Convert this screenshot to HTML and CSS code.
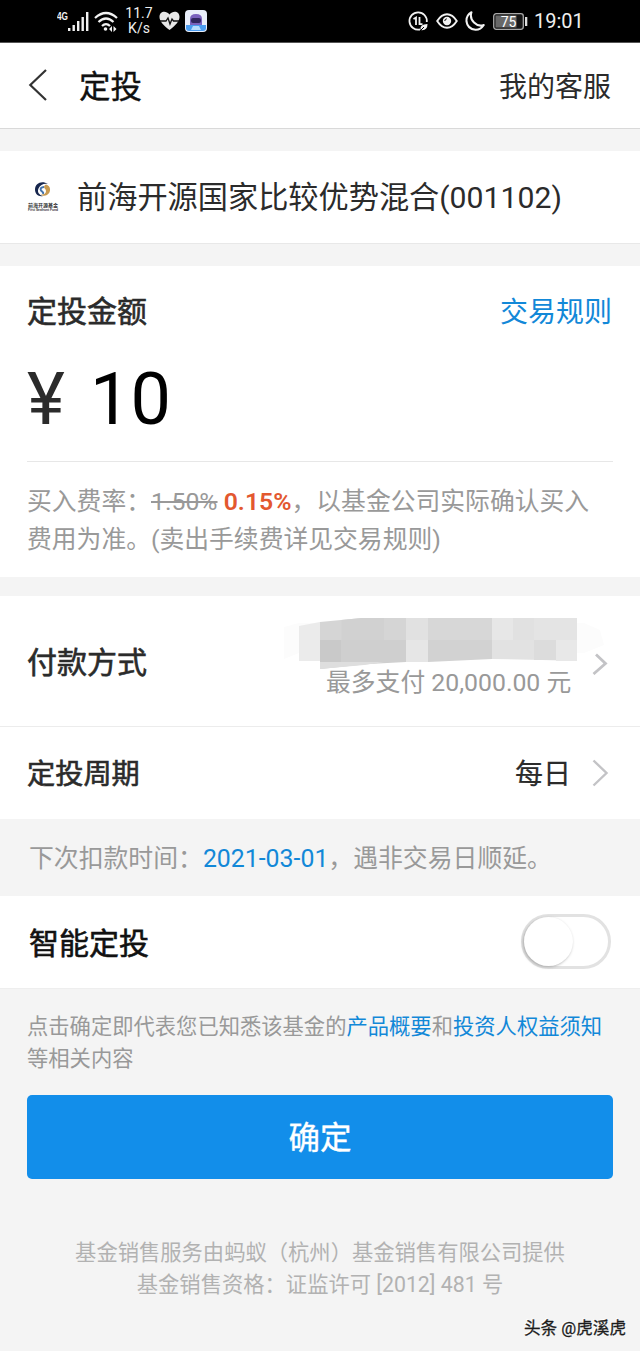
FILE: index.html
```html
<!DOCTYPE html>
<html lang="zh-CN">
<head>
<meta charset="utf-8">
<title>定投</title>
<link rel="stylesheet" href="styles.css">
</head>
<body>
<div class="status">
  <svg class="status-signal" width="34" height="24" viewBox="0 0 34 24" fill="#f2f2f2">
    <text x="0" y="11" class="net" textLength="11" lengthAdjust="spacingAndGlyphs">4G</text>
    <rect x="11" y="19" width="2.4" height="3"/><rect x="15.500" y="16" width="2.4" height="6"/><rect x="20" y="12" width="2.4" height="10"/><rect x="24.500" y="8" width="2.4" height="14"/><rect x="29" y="3" width="2.400" height="19"/>
  </svg>
  <svg class="status-wifi" width="24" height="22" viewBox="0 0 24 22" fill="none" stroke="#f2f2f2" stroke-width="2.2">
    <path d="M1 8Q12-2 23 8M4.500 12Q12 5 19.500 12M8 16Q12 12 16 16"/><circle cx="11.500" cy="19" r="1.800" fill="#f2f2f2" stroke="none"/><path fill="#f2f2f2" stroke="none" d="M18 16v6l-3-3zM19.500 16v6l3-3z"/>
  </svg>
  <div class="speed"><span>11.7</span><span>K/s</span></div>
  <svg class="status-heart" width="21" height="20" viewBox="0 0 21 20"><path fill="#e8e8e8" d="M10.500 19C4 14 .5 10 .5 6 .5 0 7-1 10.500 3.500 14-1 20.500 0 20.500 6c0 4-3.500 8-10 13z"/><path d="M1 10h6l2-3 2 6 2-5 1.500 2H20" fill="none" stroke="#111" stroke-width="1.300"/></svg>
  <svg class="status-app" width="22" height="22" viewBox="0 0 22 22"><rect width="22" height="22" rx="4" fill="#e9eefa"/><path d="M1 15h20v3q0 3-3 3H4q-3 0-3-3z" fill="#4b9df0"/><path d="M5 15V9q0-5 6-5t6 5v6z" fill="#7961bd"/><rect x="6" y="8" width="10" height="5" rx="2" fill="#30265f"/><path d="M8 16h6l2 4H6z" fill="#b5dcff"/></svg>
  <span class="grow"></span>
  <svg class="status-data" width="21" height="21" viewBox="0 0 21 21" fill="none" stroke="#f2f2f2" stroke-width="1.800"><path d="M18.800 11A8.700 8.700 0 1 0 12 18.500"/><path d="M5.500 8L8 6.500v7.500M11.500 6v7.200h3"/><path d="M12.500 19q-1-6 7-6 0 7-7 6z" fill="#f2f2f2" stroke="none"/><path d="M12 20l4-4" stroke="#000" stroke-width="1"/></svg>
  <svg class="status-eye" width="22" height="16" viewBox="0 0 22 16" fill="none" stroke="#f2f2f2" stroke-width="1.900"><path d="M1.200 8Q5.500 1.200 11 1.200T20.800 8Q16.500 14.800 11 14.800T1.200 8z"/><circle cx="11" cy="8" r="4.200" fill="#f2f2f2" stroke="none"/><path d="M8.800 8q0-2 2-2.200" stroke="#000" stroke-width="1"/></svg>
  <svg class="status-moon" width="20" height="20" viewBox="0 0 20 20" fill="none" stroke="#f2f2f2" stroke-width="2" stroke-linejoin="round"><path d="M6.500 1.200Q4.500 7 9 11.500T18.800 14Q15.500 19 10.500 18.800 2.500 18 1.500 10.500 1 4.500 6.500 1.200z"/></svg>
  <svg class="status-battery" width="35" height="17" viewBox="0 0 35 17"><rect x=".7" y=".7" width="29.600" height="15.600" rx="2.500" fill="#161616" stroke="#a8a8a8" stroke-width="1.300"/><rect x="2.500" y="2.500" width="21" height="12" fill="#686868"/><rect x="32" y="4" width="2.300" height="9" fill="#ddd"/><text x="15.500" y="13.500" class="level">75</text></svg>
  <span class="time">19:01</span>
</div>

<header class="header">
  <svg class="back" width="20" height="32" viewBox="0 0 20 32" fill="none" stroke="#333" stroke-width="2.200"><path d="M18 1L2.300 16 18 31"/></svg>
  <h1 class="title">定投</h1>
  <span class="service">我的客服</span>
</header>

<section class="fund">
  <svg class="fund-logo" width="32" height="32" viewBox="0 0 32 32">
    <path d="M21 3C15-1 8 2 8 8.500c0 5 4 7.500 8 6.500-4-1-6-4-4.500-7.500C13 4 17 2 21 3z" fill="#17264d"/>
    <path d="M19 3.500c5 1 5.500 8 1 10.500-2 1.200-5 1-6-.5 3 .5 5-1 5-3.500 0-2-2-2.500-2-4 0-1 1-2 2-2.500z" fill="#c89a50"/>
    <path d="M17 6c-3 0-4 2-3 3.500s3 1 2 3.500" fill="none" stroke="#4675ad" stroke-width="2"/>
    <text x="1" y="25.500" class="logo-cn" textLength="30" lengthAdjust="spacingAndGlyphs">前海开源基金</text>
    <text x="1" y="29.700" class="logo-en" textLength="30" lengthAdjust="spacingAndGlyphs">First Seafront Fund</text>
  </svg>
  <span class="fund-name">前海开源国家比较优势混合(001102)</span>
</section>

<section class="amount">
  <div class="amount-head"><h2 class="label">定投金额</h2><a class="rules">交易规则</a></div>
  <div class="value"><span class="yen">¥</span><span>10</span></div>
  <p class="fee">买入费率：<s>1.50%</s> <b class="rate">0.15%</b>，以基金公司实际确认买入<br>费用为准。(卖出手续费详见交易规则)</p>
</section>

<section class="settings">
  <div class="row pay">
    <span class="label">付款方式</span>
    <div class="pay-info">
      <svg class="mask" width="332" height="60" viewBox="0 0 332 60">
        <path d="M0 18L15 14H300L316 21 320 36 300 44H15L0 50z" fill="#fcfcfc"/>
        <path d="M15 17L36 13V52H15z" fill="#ebebeb"/>
        <path d="M36 13L78 9H122V31H36z" fill="#d5d5d5"/><path d="M57.500 11L78 9H100V31H57.500z" fill="#d1d1d1"/>
        <path d="M36 31H122V53L85 55 36 60z" fill="#cfcfcf"/><rect x="36" y="31" width="21" height="22" fill="#c9c9c9"/>
        <path d="M36 53H100L80 56 36 60z" fill="#dedede"/>
        <rect x="122" y="9" width="22" height="22" fill="#e1e1e1"/><rect x="122" y="31" width="22" height="22" fill="#e6e6e6"/>
        <rect x="144" y="9" width="64" height="22" fill="#d7d7d7"/><path d="M144 31H208V50L144 53z" fill="#d2d2d2"/>
        <rect x="208" y="9" width="21" height="22" fill="#e7e7e7"/><rect x="229" y="9" width="21" height="22" fill="#e1e1e1"/><rect x="250" y="9" width="43" height="22" fill="#e4e4e4"/>
        <path d="M208 31H293V52L258 51 208 50z" fill="#e2e2e2"/><rect x="250" y="31" width="22" height="20" fill="#dcdcdc"/><rect x="272" y="31" width="21" height="21" fill="#e8e8e8"/>
      </svg>
      <span class="limit">最多支付 20,000.00 元</span>
    </div>
    <svg class="arrow pay-arrow" width="17" height="22" viewBox="0 0 17 22"><path d="M4 1.500L13.500 10.500 1.500 21" fill="none" stroke="#c3c3c6" stroke-width="2.800"/></svg>
  </div>
  <div class="row period">
    <span class="label period-label">定投周期</span>
    <span class="daily">每日</span>
    <svg class="arrow" width="17" height="28" viewBox="0 0 17 28"><path d="M1.500 1.500L14.500 14 1.500 26.500" fill="none" stroke="#c3c3c6" stroke-width="2.400"/></svg>
  </div>
</section>

<p class="next">下次扣款时间：<span class="date">2021-03-01</span>，遇非交易日顺延。</p>

<section class="row smart">
  <span class="label smart-label">智能定投</span>
  <span class="switch"><span class="knob"></span></span>
</section>

<p class="agreement">点击确定即代表您已知悉该基金的<a class="link">产品概要</a>和<a class="link">投资人权益须知</a><br>等相关内容</p>
<button class="confirm">确定</button>
<footer class="footer">基金销售服务由蚂蚁（杭州）基金销售有限公司提供<br>基金销售资格：证监许可 [2012] 481 号</footer>
<div class="credit">头条 @虎溪虎</div>
</body>
</html>
```
FILE: styles.css
```css
* { box-sizing: border-box; }
body { margin: 0; width: 640px; height: 1351px; overflow: hidden; display: flex; flex-direction: column; background: #f4f4f4; color: #2b2b2b; font-family: Roboto, "Noto Sans CJK SC", sans-serif; }
body > * { flex-shrink: 0; }
h1, h2, p { margin: 0; font-weight: 400; }
.grow { flex: 1; }

.status { height: 43px; padding: 0 58px 0 57px; display: flex; align-items: center; background: #000; color: #efefef; border-bottom: 1px solid #555; }
.net { font: 700 11px "Liberation Sans", sans-serif; }
.status-wifi { margin-left: 3px; }
.speed { width: 28px; margin-left: 7px; display: flex; flex-direction: column; align-items: center; font-size: 14px; line-height: 15px; }
.status-heart { margin-left: 6px; }
.status-app { margin-left: 5px; }
.status-eye { margin-left: 7px; }
.status-moon { margin-left: 7px; }
.status-battery { margin-left: 8px; }
.level { font-size: 14px; fill: #fff; text-anchor: middle; }
.time { width: 48px; margin-left: 6px; font-size: 20px; white-space: nowrap; }

.header { height: 86px; padding: 0 29px; display: flex; align-items: center; background: #fff; border-bottom: 1px solid #d9d9d9; }
.back { margin: 0 1px 2px -1px; }
.title { margin-left: 30px; padding-bottom: 3px; font-size: 31.5px; color: #111; -webkit-text-stroke: .35px currentColor; }
.service { margin-left: auto; padding-bottom: 1px; font-size: 28px; }

.fund { height: 93px; margin-top: 22px; padding: 0 27px; display: flex; align-items: center; background: #fff; border-bottom: 1px solid #e8e8e8; }
.fund-logo { margin-right: 18px; overflow: visible; }
.fund-name { padding-bottom: 4px; font-size: 30.2px; }
.logo-cn { font: 700 5px "Noto Sans CJK SC", sans-serif; fill: #333; }
.logo-en { font: 700 3.500px "Liberation Sans", sans-serif; fill: #333; }

.amount { height: 311px; margin-top: 22px; padding: 0 27px; background: #fff; }
.amount-head { height: 88px; padding-right: 1px; display: flex; align-items: center; justify-content: space-between; }
.label { padding-bottom: 3px; font-size: 30px; font-weight: 400; -webkit-text-stroke: .6px currentColor; }
.rules { padding-bottom: 1px; font-size: 28px; color: #1288d8; }
.value { height: 108px; padding-bottom: 15px; display: flex; align-items: center; border-bottom: 1px solid #e7e7e7; font-size: 72px; line-height: 84px; color: #000; }
.yen { width: 63px; color: #2b2b2b; }
.fee { padding-top: 21px; font-size: 24.800px; line-height: 38px; color: #999; white-space: nowrap; }
.rate { color: #e3582f; font-weight: 600; }

.settings { margin-top: 19px; }
.row { display: flex; align-items: center; padding: 0 31px 0 27px; background: #fff; }
.pay { height: 131px; border-bottom: 1px solid #ececec; }
.pay-info { width: 332px; height: 100%; margin-left: auto; margin-right: -24px; padding-top: 13px; display: flex; flex-direction: column; align-items: flex-start; }
.limit { margin: -3px 0 0 42px; font-size: 24.800px; line-height: 34px; color: #999; white-space: nowrap; }
.pay-arrow { margin-top: 5px; }
.period { height: 92px; }
.period-label { font-size: 28.200px; }
.daily { margin-left: auto; margin-right: 21px; padding-bottom: 2px; font-size: 28px; -webkit-text-stroke: .2px currentColor; }
.period .arrow { margin-bottom: 1px; }

.next { height: 77px; padding: 1px 0 0 29px; font-size: 24.850px; line-height: 77px; color: #999; white-space: nowrap; }
.date, .link { color: #1288d8; }
.smart { height: 93px; padding: 0 29px; border-bottom: 1px solid #eee; }
.smart-label { color: #111; }
.switch { width: 90px; height: 55px; margin: 0 0 1px auto; border: 3px solid #e2e2e2; border-radius: 28px; background: #fff; }
.knob { display: block; width: 49px; height: 49px; border-radius: 50%; background: #fff; box-shadow: -1px 1px 3px #aaa; }

.agreement { margin-top: 22px; padding-left: 27px; font-size: 21.300px; line-height: 32px; color: #999; white-space: nowrap; }
.confirm { width: 586px; height: 84px; margin: 20px 27px 0; padding: 0 0 4px; border: 0; border-radius: 5px; background: #128eea; color: #fff; font: 400 31.500px Roboto, "Noto Sans CJK SC", sans-serif; -webkit-text-stroke: .4px currentColor; }
.footer { margin-top: 58px; text-align: center; font-size: 21.300px; line-height: 32px; color: #b2b2b2; white-space: nowrap; }
.credit { margin: 12px 14px 0 auto; font-size: 16.600px; line-height: 32px; color: #1c1c1c; text-shadow: -1px -1px #fff; -webkit-text-stroke: .3px currentColor; }
```
